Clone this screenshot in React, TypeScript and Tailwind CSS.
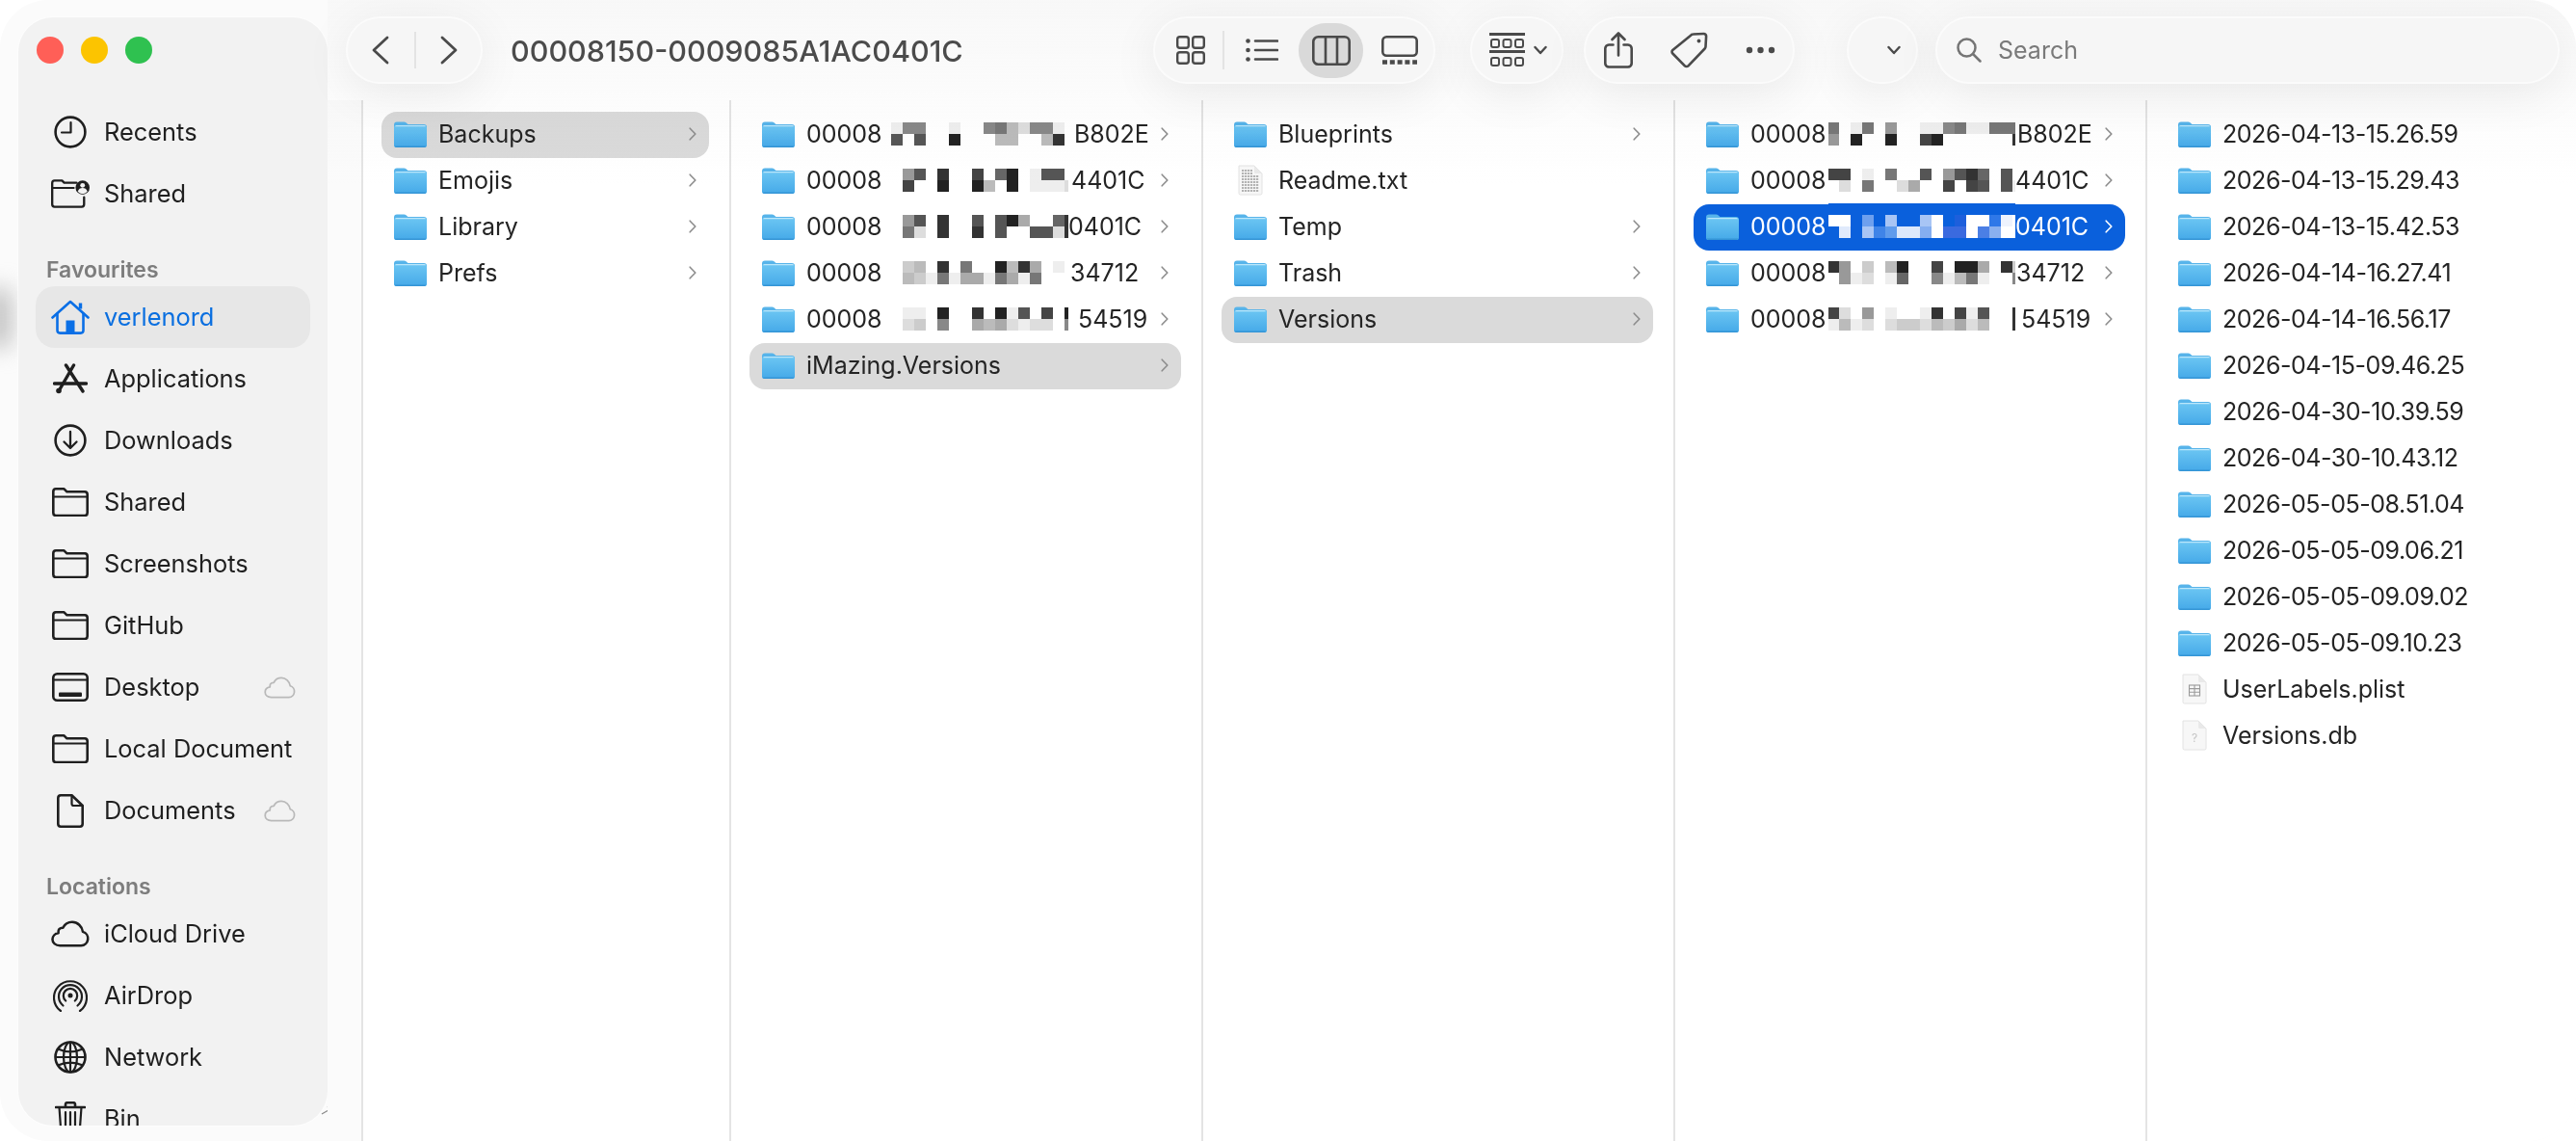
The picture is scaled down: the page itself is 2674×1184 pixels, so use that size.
import React from "react";

const S = "#4a4a4a";
const K = "#1f1f1f";

function Folder() {
  return (
    <svg width="34" height="27" viewBox="0 0 34 27" className="shrink-0">
      <defs>
        <linearGradient id="fb" x1="0" y1="0" x2="0" y2="1">
          <stop offset="0" stopColor="#6cc6f3" />
          <stop offset="1" stopColor="#45a9e8" />
        </linearGradient>
      </defs>
      <path d="M0 3.5A3 3 0 0 1 3 .5h7.5a3 3 0 0 1 2 .8L14.5 3H31a3 3 0 0 1 3 3v5H0z" fill="#57b4ea" />
      <rect x="0" y="4" width="34" height="23" rx="2.6" fill="url(#fb)" />
      <path d="M1 5.2a2 2 0 0 1 2-1.2h28a2 2 0 0 1 2 1.2z" fill="#c9ecfb" opacity="0.85" />
      <path d="M0.6 25.4a2.6 2.6 0 0 0 2 1.6h28.8a2.6 2.6 0 0 0 2-1.6z" fill="#2f8fd0" opacity="0.75" />
    </svg>
  );
}

function Page({ children }: { children?: React.ReactNode }) {
  return (
    <svg width="34" height="32" viewBox="0 0 34 32" className="shrink-0">
      <path d="M5 1h16l8 8v20.5a1.5 1.5 0 0 1-1.5 1.5h-21A1.5 1.5 0 0 1 5 29.5z" fill="#f7f7f7" stroke="#e2e2e2" strokeWidth="1" />
      <path d="M21 1v6.5A1.5 1.5 0 0 0 22.5 9H29z" fill="#e9e9e9" />
      {children}
    </svg>
  );
}

const IReadme = () => (
  <Page>
    {[6, 9, 12, 15, 18, 21, 24, 27].map((y) => (
      <path key={y} d={`M8 ${y}h${y < 10 ? 11 : 18}`} stroke="#b3b3b3" strokeWidth="2" strokeDasharray="2.2 0.8" />
    ))}
  </Page>
);
const IPlist = () => (
  <Page>
    <rect x="11.5" y="12" width="11" height="11" fill="none" stroke="#9a9a9a" strokeWidth="1.1" />
    <path d="M11.5 15.6h11M11.5 19.3h11M17 12v11" stroke="#9a9a9a" strokeWidth="1.1" />
  </Page>
);
const IDb = () => (
  <Page>
    <text x="17" y="23" fontSize="12" textAnchor="middle" fill="#c4c4c4" fontFamily="Inter">?</text>
  </Page>
);

function Chev({ white }: { white?: boolean }) {
  return (
    <svg width="8" height="14" viewBox="0 0 8 14" className="shrink-0">
      <path d="M1.2 1.2 6.8 7l-5.6 5.8" fill="none" stroke={white ? "#ffffff" : "#8c8c8c"} strokeWidth="1.6" strokeLinecap="round" strokeLinejoin="round" />
    </svg>
  );
}

const W = "#ffffff";
const B = "#0a60dc";
const BLUE_ROW: string[][] = [
  [W, W, B, "#6ea0ee", B, "#a8c5f5", B, B, "#a8c5f5", W, B, "#1d5fdc", W, W, "#2f78e8", "#eef3fd", W],
  [B, "#e0eafc", B, "#a8c5f5", "#3f84e8", "#5f9bec", "#dce8fb", "#dce8fb", "#85aef0", W, "#3a6adf", "#3a6adf", W, "#4b7fe5", "#8ab0ef", W, W],
];

function hexRow(s: string) {
  return s.split("").map((c) => `#${c}${c}${c}${c}${c}${c}`);
}

function Mosaic({ rows, wide, blue }: { rows: string[][]; wide?: boolean; blue?: boolean }) {
  const cells = [...rows[0], ...rows[1]];
  return (
    <span className={`relative grid shrink-0 grid-rows-[12px_12px] ${wide ? "w-[194px] ml-[1px] grid-cols-[11px_repeat(15,12px)_3px]" : "w-[192px] grid-cols-[8px_repeat(15,12px)_4px]"}`}>
      {blue && <span className="absolute left-0 right-0 top-[-12px] h-[49px] bg-[#0a60dc]" />}
      {cells.map((c, i) => (
        <span key={i} className="relative block" style={{ backgroundColor: c }} />
      ))}
    </span>
  );
}

type Item = {
  name?: string;
  nameClass?: string;
  head?: string;
  rows?: string[][];
  wide?: boolean;
  blue?: boolean;
  tail?: string;
  tailClass?: string;
  doc?: "readme" | "plist" | "db";
  sel?: "gray" | "blue";
  noChev?: boolean;
};

function Row({ it }: { it: Item }) {
  const bg = it.sel === "gray" ? "bg-[#dadada]" : it.sel === "blue" ? "bg-[#0a60dc]" : "";
  const col = it.sel === "blue" ? "text-white" : "text-[#242424]";
  return (
    <div className={`flex h-[48px] items-center rounded-[16px] pb-[2px] pl-[13px] pr-[13px] ${bg} ${col}`}>
      {it.doc === "readme" ? <IReadme /> : it.doc === "plist" ? <IPlist /> : it.doc === "db" ? <IDb /> : <Folder />}
      <div className="ml-[12px] flex min-w-0 flex-1 items-center whitespace-nowrap text-[25px] leading-[30px]">
        {it.rows ? (
          <>
            <span className="w-[80px] shrink-0">{it.head}</span>
            <Mosaic rows={it.rows} wide={it.wide} blue={it.blue} />
            <span className={`block ${it.tailClass ?? ""}`}>{it.tail}</span>
          </>
        ) : (
          <span className={it.nameClass}>{it.name}</span>
        )}
      </div>
      {!it.doc && !it.noChev && <Chev white={it.sel === "blue"} />}
    </div>
  );
}

function Column({ items, className }: { items: Item[]; className: string }) {
  return (
    <div className={`shrink-0 border-l-2 border-[#e4e4e4] pt-[12px] ${className}`}>
      {items.map((it, i) => (
        <Row key={i} it={it} />
      ))}
    </div>
  );
}

const col1: Item[] = [
  { name: "Backups", sel: "gray" },
  { name: "Emojis" },
  { name: "Library" },
  { name: "Prefs" },
];
const col2: Item[] = [
  { head: "00008", rows: [hexRow("fe88ffeff87bd88ef"), hexRow("f5f5ff2fffbbffb3f")], tail: "B802E", tailClass: "ml-[6px]" },
  { head: "00008", rows: [hexRow("ff95f3ff4f62fe55f"), hexRow("ff4ff2ff2bf2feeed")], tail: "4401C", tailClass: "ml-[3px]" },
  { head: "00008", rows: [hexRow("ff95f3ff5f52aff63"), hexRow("ff7df3ff3f5ff55d3")], tail: "0401C", tailClass: "ml-[0px]" },
  { head: "00008", rows: [hexRow("ffcbf3f7ff2b3afef"), hexRow("ffbce7eaae7ae7fff")], tail: "34712", tailClass: "ml-[2px]" },
  { head: "00008", rows: [hexRow("ffeef2ff3f2e5f4f2"), hexRow("ffdcf8ffabadeddf8")], tail: "54519", tailClass: "ml-[10px]" },
  { name: "iMazing.Versions", sel: "gray" },
];
const col3: Item[] = [
  { name: "Blueprints" },
  { name: "Readme.txt", doc: "readme" },
  { name: "Temp" },
  { name: "Trash" },
  { name: "Versions", sel: "gray" },
];
const col4: Item[] = [
  { head: "00008", wide: true, rows: [hexRow("7fe7f9ffee87ee777"), hexRow("9f2ff2ff42ffffff3")], tail: "B802E", tailClass: "ml-[2px]" },
  { head: "00008", wide: true, rows: [hexRow("44fef7ff5f9536f5f"), hexRow("fdf7ffdaff4f45f5e")], tail: "4401C", tailClass: "ml-[0px]" },
  { head: "00008", wide: true, blue: true, sel: "blue", rows: BLUE_ROW, tail: "0401C", tailClass: "ml-[0px]" },
  { head: "00008", wide: true, rows: [hexRow("39fcfb2ff4f22af3c"), hexRow("f9edfe6ff8eb7eff8")], tail: "34712", tailClass: "ml-[1px]" },
  { head: "00008", wide: true, rows: [hexRow("4df9feffe3f4e5ff3"), hexRow("ebedfdccdbcadbff3")], tail: "54519", tailClass: "ml-[6px]" },
];
const col5: Item[] = [
  ...[
    "2026-04-13-15.26.59",
    "2026-04-13-15.29.43",
    "2026-04-13-15.42.53",
    "2026-04-14-16.27.41",
    "2026-04-14-16.56.17",
    "2026-04-15-09.46.25",
    "2026-04-30-10.39.59",
    "2026-04-30-10.43.12",
    "2026-05-05-08.51.04",
    "2026-05-05-09.06.21",
    "2026-05-05-09.09.02",
    "2026-05-05-09.10.23",
  ].map((name) => ({ name, noChev: true, nameClass: "tracking-[-0.45px]" })),
  { name: "UserLabels.plist", doc: "plist" as const },
  { name: "Versions.db", doc: "db" as const },
];

const sw = { fill: "none", strokeWidth: 2.6, strokeLinecap: "round" as const, strokeLinejoin: "round" as const };

const IClock = () => (
  <svg width="34" height="34" viewBox="0 0 34 34" {...sw} stroke={K}>
    <circle cx="17" cy="17" r="15.4" />
    <path d="M17.5 7v10.5H8" strokeWidth="2.2" />
  </svg>
);
const ISharedFolder = () => (
  <svg width="44" height="32" viewBox="0 0 44 32" {...sw} stroke={K}>
    <path d="M29 3.5H15L12.5 1H4A2.8 2.8 0 0 0 1.3 3.8v24.4A2.8 2.8 0 0 0 4 31h31a2.8 2.8 0 0 0 2.7-2.8V20" />
    <path d="M2 9.5h24" strokeWidth="2.2" />
    <circle cx="36" cy="9" r="8" fill={K} stroke="none" />
    <circle cx="36" cy="6.5" r="2.7" fill="#f2f2f2" stroke="none" />
    <path d="M30.5 13.5c1-3 3-4 5.500-4s4.500 1 5.500 4a7 7 0 0 1-11 0z" fill="#f2f2f2" stroke="none" />
  </svg>
);
const IHome = () => (
  <svg width="40" height="36" viewBox="0 0 40 36" {...sw} stroke="#0a6fe6">
    <path d="M1.500 18.500 20 2l18.500 16.500" />
    <path d="M30.500 9.500V3.500" strokeWidth="3.400" strokeLinecap="butt" />
    <path d="M6.500 14.500v17.300a2.800 2.800 0 0 0 2.800 2.800h21.400a2.800 2.800 0 0 0 2.800-2.800V14.500" />
    <rect x="15.500" y="21.500" width="9" height="13" fill="#0a6fe6" stroke="none" />
  </svg>
);
const IApps = () => (
  <svg width="36" height="32" viewBox="0 0 36 32" {...sw} stroke={K}>
    <path d="M13.500 2 31 29M21.500 2 7 27" strokeWidth="3.400" />
    <path d="M1.500 21h33" strokeWidth="3.400" />
    <circle cx="6" cy="28.500" r="2.800" fill={K} stroke="none" />
  </svg>
);
const IDownload = () => (
  <svg width="34" height="34" viewBox="0 0 34 34" {...sw} stroke={K}>
    <circle cx="17" cy="17" r="15.400" />
    <path d="M17 8v17M10.500 18.500 17 25l6.500-6.500" strokeWidth="2.300" />
  </svg>
);
const IFolderLine = () => (
  <svg width="38" height="30" viewBox="0 0 38 30" {...sw} stroke={K}>
    <path d="M1.300 4A2.800 2.800 0 0 1 4 1.300h8.500l3 3H34A2.800 2.800 0 0 1 36.700 7v19.200A2.800 2.800 0 0 1 34 29H4a2.800 2.800 0 0 1-2.700-2.800z" />
    <path d="M2 9.500h34" strokeWidth="2.200" />
  </svg>
);
const IDesktop = () => (
  <svg width="38" height="30" viewBox="0 0 38 30" {...sw} stroke={K}>
    <rect x="1.300" y="1.300" width="35.400" height="27.400" rx="4" />
    <path d="M2 7.500h34" strokeWidth="2.200" />
    <rect x="7" y="20.500" width="24" height="4.500" rx="1" fill={K} stroke="none" />
  </svg>
);
const IDoc = () => (
  <svg width="28" height="35" viewBox="0 0 28 35" {...sw} stroke={K}>
    <path d="M1.300 4A2.800 2.800 0 0 1 4 1.300h11.500L26.700 12v19a2.800 2.800 0 0 1-2.700 2.700H4A2.800 2.800 0 0 1 1.300 31z" />
    <path d="M15.500 1.500V10a2 2 0 0 0 2 2h9" strokeWidth="2.200" />
  </svg>
);
const ICloud = ({ w = 41, h = 28, c = K, sw2 = 2.600 }: { w?: number; h?: number; c?: string; sw2?: number }) => (
  <svg width={w} height={h} viewBox="0 0 41 28" fill="none" stroke={c} strokeWidth={sw2} strokeLinejoin="round">
    <path d="M9.500 26.500h22.500a7.500 7.500 0 0 0 1.800-14.700C33 6 28.300 1.500 22.500 1.500c-4.300 0-8 2.400-9.800 6C7 7.500 7.800 12 7.800 13.300 4 13.800 1.500 16.700 1.500 20c0 3.700 3.300 6.500 8 6.500z" />
  </svg>
);
const IAir = () => (
  <svg width="36" height="34" viewBox="0 0 36 34" fill="none" stroke={K} strokeWidth="2.200" strokeLinecap="round">
    <path d="M8 33A17 17 0 1 1 28 33" />
    <path d="M10.500 27.500A12 12 0 1 1 25.500 27.500" />
    <path d="M13.200 22.500A7.200 7.200 0 1 1 22.800 22.500" />
    <circle cx="18" cy="17" r="2.500" fill={K} stroke="none" />
  </svg>
);
const IGlobe = () => (
  <svg width="34" height="34" viewBox="0 0 34 34" fill="none" stroke={K} strokeWidth="2.200">
    <circle cx="17" cy="17" r="15.500" strokeWidth="2.600" />
    <ellipse cx="17" cy="17" rx="7" ry="15.500" />
    <path d="M17 1.500v31M1.500 17h31M4 8.500c8 3.500 18 3.500 26 0M4 25.500c8-3.500 18-3.500 26 0" />
  </svg>
);
const ITrash = () => (
  <svg width="32" height="36" viewBox="0 0 32 36" {...sw} stroke={K}>
    <path d="M1 6h30M11 6V3a1.800 1.800 0 0 1 1.800-1.800h6.400A1.800 1.800 0 0 1 21 3v3" />
    <path d="M4.500 6l2 28h19l2-28M11 11v20M16 11v20M21 11v20" strokeWidth="2.200" />
  </svg>
);

function SideRow({ icon, label, active, cloud }: { icon: React.ReactNode; label: string; active?: boolean; cloud?: boolean }) {
  return (
    <div className={`mx-[18px] flex h-[64px] shrink-0 items-center rounded-[20px] pl-[16px] pr-[15px] text-[25.4px] ${active ? "bg-[#e7e7e7] text-[#0a6fe0]" : "text-[#1f1f1f]"}`}>
      <span className="flex w-[40px] shrink-0 items-center justify-center">{icon}</span>
      <span className="ml-[15px] whitespace-nowrap pt-[1px]">{label}</span>
      {cloud && (
        <span className="ml-auto">
          <ICloud w={33} h={23} c="#b9b9b9" sw2={2.200} />
        </span>
      )}
    </div>
  );
}

function SideHead({ label }: { label: string }) {
  return (
    <div className="flex h-[64px] shrink-0 items-end pb-[3px] pl-[29px] text-[23px] font-semibold leading-[28px] text-[#7d7d7d]">{label}</div>
  );
}

const pill = "flex h-[70px] shrink-0 items-center rounded-[35px] bg-[#f6f6f6] shadow-[inset_0_0_0_2px_rgba(255,255,255,0.55),0_10px_50px_rgba(0,0,0,0.075)]";

export default function App() {
  return (
    <div className="relative h-[1184px] w-[2674px] overflow-hidden bg-white font-['Inter','Liberation_Sans',sans-serif]">
      <div className="relative flex h-[1184px] w-full overflow-hidden rounded-[50px] bg-[#fbfbfb] pl-[19px]">
        <div className="absolute left-[-12px] top-[300px] h-[60px] w-[22px] bg-[#b5b5b5] blur-md" />
        <aside className="relative mb-[16px] mt-[18px] flex w-[321px] shrink-0 flex-col overflow-hidden rounded-[36px] bg-[#f2f2f2] shadow-[0_0_0_1px_rgba(255,255,255,0.6)]">
          <div className="flex h-[87px] shrink-0 items-start gap-[18px] pl-[19px] pt-[20px]">
            <span className="h-[28px] w-[28px] rounded-full bg-[#ff5f57]" />
            <span className="h-[28px] w-[28px] rounded-full bg-[#fcc400]" />
            <span className="h-[28px] w-[28px] rounded-full bg-[#2fc150]" />
          </div>
          <SideRow icon={<IClock />} label="Recents" />
          <SideRow icon={<ISharedFolder />} label="Shared" />
          <SideHead label="Favourites" />
          <SideRow icon={<IHome />} label="verlenord" active />
          <SideRow icon={<IApps />} label="Applications" />
          <SideRow icon={<IDownload />} label="Downloads" />
          <SideRow icon={<IFolderLine />} label="Shared" />
          <SideRow icon={<IFolderLine />} label="Screenshots" />
          <SideRow icon={<IFolderLine />} label="GitHub" />
          <SideRow icon={<IDesktop />} label="Desktop" cloud />
          <SideRow icon={<IFolderLine />} label="Local Document" />
          <SideRow icon={<IDoc />} label="Documents" cloud />
          <SideHead label="Locations" />
          <SideRow icon={<ICloud />} label="iCloud Drive" />
          <SideRow icon={<IAir />} label="AirDrop" />
          <SideRow icon={<IGlobe />} label="Network" />
          <SideRow icon={<ITrash />} label="Bin" />
        </aside>
        <svg width="10" height="10" viewBox="0 0 10 10" className="absolute left-[333px] top-[1147px]" fill="none" stroke="#8a8a8a" strokeWidth="1.300">
          <path d="M1 9 8 5l-.6-4" />
        </svg>
        <main className="relative flex min-w-0 flex-1 flex-col bg-white">
          <div className="pointer-events-none absolute left-0 right-0 top-0 z-10 h-[190px] bg-gradient-to-b from-[#f8f8f8] to-transparent mix-blend-multiply" />
          <header className="relative z-20 flex h-[104px] shrink-0 items-start pl-[19px] pr-[17px] pt-[17px]">
            <div className={`${pill} w-[142px]`}>
              <span className="flex flex-1 justify-center pl-[1px]">
                <svg width="20" height="30" viewBox="0 0 20 30" fill="none" stroke={S} strokeWidth="2.800" strokeLinecap="round" strokeLinejoin="round">
                  <path d="M17 2 3 15l14 13" />
                </svg>
              </span>
              <span className="h-[38px] w-[2px] bg-[#e3e3e3]" />
              <span className="flex flex-1 justify-center">
                <svg width="20" height="30" viewBox="0 0 20 30" fill="none" stroke={S} strokeWidth="2.800" strokeLinecap="round" strokeLinejoin="round">
                  <path d="M3 2l14 13L3 28" />
                </svg>
              </span>
            </div>
            <div className="ml-[29px] flex h-[70px] min-w-0 flex-1 items-center whitespace-nowrap pt-[2px] text-[30.5px] font-medium text-[#4b4b4b]">00008150-0009085A1AC0401C</div>

            <div className={`${pill} w-[293px]`}>
              <span className="relative flex h-full w-[74px] items-center justify-center pl-[4px]">
                <svg width="30" height="30" viewBox="0 0 30 30" fill="none" stroke={S} strokeWidth="2.400">
                  <rect x="1.200" y="1.200" width="11.600" height="11.600" rx="2.500" />
                  <rect x="17.200" y="1.200" width="11.600" height="11.600" rx="2.500" />
                  <rect x="1.200" y="17.200" width="11.600" height="11.600" rx="2.500" />
                  <rect x="17.200" y="17.200" width="11.600" height="11.600" rx="2.500" />
                </svg>
                <span className="absolute right-0 top-[15px] h-[40px] w-[2px] bg-[#e3e3e3]" />
              </span>
              <span className="flex h-full w-[77px] items-center justify-center">
                <svg width="34" height="24" viewBox="0 0 34 24" fill="none" stroke={S} strokeWidth="2.600" strokeLinecap="round">
                  <path d="M10 2.500h23M10 12h23M10 21.500h23" />
                  <circle cx="2.500" cy="2.500" r="2.300" fill={S} stroke="none" />
                  <circle cx="2.500" cy="12" r="2.300" fill={S} stroke="none" />
                  <circle cx="2.500" cy="21.500" r="2.300" fill={S} stroke="none" />
                </svg>
              </span>
              <span className="flex h-[57px] w-[67px] items-center justify-center rounded-[28px] bg-[#d9d9d9]">
                <svg width="40" height="31" viewBox="0 0 40 31" fill="none" stroke={S} strokeWidth="2.600">
                  <rect x="1.300" y="1.300" width="37.400" height="28.400" rx="5" />
                  <path d="M14 1.500v28M26 1.500v28" />
                </svg>
              </span>
              <span className="flex h-full w-[75px] items-center justify-center">
                <svg width="38" height="30" viewBox="0 0 38 30" fill="none" stroke={S} strokeWidth="2.600">
                  <rect x="1.300" y="1.300" width="35.400" height="19.400" rx="4" />
                  <path d="M1 27.500h36" strokeWidth="4.500" strokeDasharray="5 2.800" />
                </svg>
              </span>
            </div>

            <div className={`${pill} ml-[36px] w-[97px] justify-center gap-[9px] pl-[2px]`}>
              <svg width="37" height="36" viewBox="0 0 37 36" fill="none" stroke={S} strokeWidth="2">
                <path d="M0 1.500h37M0 19.500h37" strokeWidth="3" />
                <rect x="2" y="7" width="8" height="8" rx="2" />
                <rect x="14.500" y="7" width="8" height="8" rx="2" />
                <rect x="27" y="7" width="8" height="8" rx="2" />
                <rect x="2" y="26" width="8" height="8" rx="2" />
                <rect x="14.500" y="26" width="8" height="8" rx="2" />
                <rect x="27" y="26" width="8" height="8" rx="2" />
              </svg>
              <svg width="14" height="10" viewBox="0 0 14 10" fill="none" stroke={S} strokeWidth="2.400" strokeLinecap="round" strokeLinejoin="round">
                <path d="M1.500 2 7 8l5.500-6" />
              </svg>
            </div>

            <div className={`${pill} ml-[21px] w-[219px] justify-between pl-[21px] pr-[20px]`}>
              <svg width="30" height="38" viewBox="0 0 30 38" fill="none" stroke={S} strokeWidth="2.600" strokeLinecap="round" strokeLinejoin="round">
                <path d="M9.500 13.500H5A3.800 3.800 0 0 0 1.300 17.300v15.400A3.800 3.800 0 0 0 5 36.500h20a3.800 3.800 0 0 0 3.700-3.800V17.300A3.800 3.800 0 0 0 25 13.500h-4.500" />
                <path d="M15 24.500V2M8.500 8 15 1.500 21.500 8" />
              </svg>
              <svg width="39" height="38" viewBox="0 0 39 38" fill="none" stroke={S} strokeWidth="2.600" strokeLinejoin="round">
                <path d="M23.500 2.500 34.500 2a2.500 2.500 0 0 1 2.600 2.600L36.500 15.500a3 3 0 0 1-.9 2L18.500 35.300a2.500 2.500 0 0 1-3.600 0L2.300 22.500a2.500 2.500 0 0 1 0-3.600L21.400 3.400a3 3 0 0 1 2.100-.9z" />
                <circle cx="29.500" cy="9.500" r="1.900" fill={S} stroke="none" />
              </svg>
              <svg width="31" height="8" viewBox="0 0 31 8" fill={S}>
                <circle cx="4" cy="4" r="3.200" />
                <circle cx="15.500" cy="4" r="3.200" />
                <circle cx="27" cy="4" r="3.200" />
              </svg>
            </div>

            <div className={`${pill} ml-[54px] w-[74px] justify-end pr-[18px]`}>
              <svg width="14" height="10" viewBox="0 0 14 10" fill="none" stroke={S} strokeWidth="2.400" strokeLinecap="round" strokeLinejoin="round">
                <path d="M1.500 2 7 8l5.500-6" />
              </svg>
            </div>

            <div className={`${pill} ml-[18px] w-[648px] pl-[22px]`}>
              <svg width="26" height="26" viewBox="0 0 26 26" fill="none" stroke="#757575" strokeWidth="2.500" strokeLinecap="round">
                <circle cx="10.500" cy="10.500" r="9" />
                <path d="M17 17l7.500 7.500" />
              </svg>
              <span className="ml-[17px] pt-[2px] text-[25px] text-[#7a7a7a]">Search</span>
            </div>
          </header>

          <div className="flex min-h-0 flex-1">
            <div className="w-[35px] shrink-0 bg-[#fbfbfb]" />
            <Column items={col1} className="w-[382px] pl-[19px] pr-[21px]" />
            <Column items={col2} className="w-[490px] pl-[19px] pr-[21px]" />
            <Column items={col3} className="w-[490px] pl-[19px] pr-[21px]" />
            <Column items={col4} className="w-[490px] pl-[19px] pr-[21px]" />
            <Column items={col5} className="w-[447px] pl-[19px] pr-[21px]" />
          </div>
        </main>
      </div>
    </div>
  );
}
